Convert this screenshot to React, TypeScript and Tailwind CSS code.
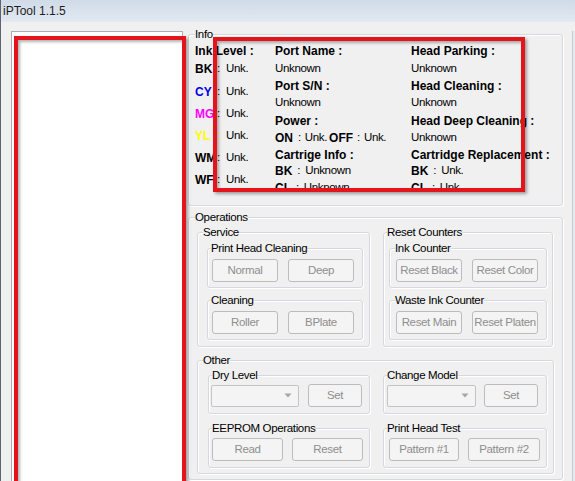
import React from "react";

type GBProps = {
  label: string;
  labelPos: string;
  className?: string;
  children?: React.ReactNode;
};

function GroupBox({ label, labelPos, className = "", children }: GBProps) {
  return (
    <div
      className={`relative rounded-[3px] border border-[#d5d9dd] shadow-[inset_1px_1px_0_#ffffff,1px_1px_0_#ffffff] ${className}`}
    >
      <span
        className={`absolute -top-[8px] ${labelPos} bg-[#f0f0f0] leading-[14px] text-black whitespace-nowrap`}
      >
        {label}
      </span>
      {children}
    </div>
  );
}

function Btn({ w, children }: { w: string; children: React.ReactNode }) {
  return (
    <div
      className={`${w} h-[23px] flex-none flex items-center justify-center rounded-[3px] border border-[#bcbcbc] bg-[#f4f4f4] text-[#8e8e8e] leading-none`}
    >
      {children}
    </div>
  );
}

function Combo({ w }: { w: string }) {
  return (
    <div
      className={`${w} h-[22px] flex-none flex items-center justify-end pr-[6px] rounded-[2px] border border-[#c4c4c4] bg-[#f4f4f4]`}
    >
      <svg width="8" height="5" viewBox="0 0 8 5">
        <path d="M0.5 0.5 L7.5 0.5 L4 4.5 Z" fill="#a6a6a6" />
      </svg>
    </div>
  );
}

const B = ({ children }: { children: React.ReactNode }) => (
  <span className="font-bold text-[12px] tracking-normal">{children}</span>
);

function KV({ k, v }: { k: string; v: string }) {
  return (
    <>
      <B>{k}</B>
      <span className="ml-[5px]">:</span>
      <span className="ml-[5px]">{v}</span>
    </>
  );
}

function InkRow({
  label,
  color,
  colonColor = "text-black",
  h,
}: {
  label: string;
  color: string;
  colonColor?: string;
  h: string;
}) {
  return (
    <div className={`${h} flex items-center`}>
      <span className={`w-[21px] font-bold text-[12px] tracking-normal ${color}`}>{label}</span>
      <span className={`w-[10px] pl-[1px] ${colonColor}`}>:</span>
      <span>Unk.</span>
    </div>
  );
}

export default function App() {
  const rowH = ["h-[18px]", "h-[18px]", "h-[17px]", "h-[18px]", "h-[18px]", "h-[17px]", "h-[16px]", "h-[17px]", "h-[16px]"];
  const port: React.ReactNode[] = [
    <B>Port Name :</B>,
    "Unknown",
    <B>Port S/N :</B>,
    "Unknown",
    <B>Power :</B>,
    <>
      <B>ON</B>
      <span className="ml-[5px]">:</span>
      <span className="ml-[4px]">Unk.</span>
      <span className="ml-[2px]">
        <B>OFF</B>
      </span>
      <span className="ml-[4px]">:</span>
      <span className="ml-[4px]">Unk.</span>
    </>,
    <B>Cartrige Info :</B>,
    <KV k="BK" v="Unknown" />,
    <KV k="CL" v="Unknown" />,
  ];
  const head: React.ReactNode[] = [
    <B>Head Parking :</B>,
    "Unknown",
    <B>Head Cleaning :</B>,
    "Unknown",
    <B>Head Deep Cleaning :</B>,
    "Unknown",
    <B>Cartridge Replacement :</B>,
    <KV k="BK" v="Unk." />,
    <KV k="CL" v="Unk." />,
  ];

  return (
    <div className="relative w-[575px] h-[481px] overflow-hidden bg-[#f0f0f0] border-l border-[#5b6470] flex flex-col font-['Liberation_Sans',Arial,sans-serif] text-[11.5px] tracking-[-0.35px] text-black">
      {/* Title bar */}
      <div className="h-[22px] flex-none flex items-center pl-[2px] bg-linear-to-b from-[#d0dbe8] to-[#e2e9f1] text-[12px] tracking-normal text-[#1e1e1e]">
        iPTool 1.1.5
      </div>

      {/* Body */}
      <div className="flex-1 flex items-start pt-[9px] pl-[10px]">
        {/* list box */}
        <div className="w-[172px] h-[460px] flex-none border border-[#abadb3] bg-white" />

        {/* right column */}
        <div className="ml-[5px] w-[375px] flex-none flex flex-col pt-[3px]">
          {/* Info */}
          <GroupBox label="Info" labelPos="left-[6px]" className="pt-[7px] pb-[14px]">
            <div className="h-[149px] overflow-hidden flex pl-[6px]">
              <div className="w-[80px] flex-none flex flex-col">
                <div className="h-[18px] flex items-center">
                  <B>Ink Level :</B>
                </div>
                <InkRow label="BK" color="text-black" h="h-[18px]" />
                <div className="h-[3px]" />
                <InkRow label="CY" color="text-[#0000e6]" h="h-[24px]" />
                <InkRow label="MG" color="text-[#ff00ff]" h="h-[24px]" />
                <InkRow label="YL" color="text-[#ffff00]" colonColor="text-[#ffff00]" h="h-[24px]" />
                <InkRow label="WM" color="text-black" h="h-[24px]" />
                <InkRow label="WF" color="text-black" h="h-[24px]" />
              </div>
              <div className="w-[136px] flex-none flex flex-col">
                {port.map((c, i) => (
                  <div key={i} className={`${rowH[i]} flex items-center whitespace-nowrap`}>
                    {c}
                  </div>
                ))}
              </div>
              <div className="flex-1 flex flex-col">
                {head.map((c, i) => (
                  <div key={i} className={`${rowH[i]} flex items-center whitespace-nowrap`}>
                    {c}
                  </div>
                ))}
              </div>
            </div>
          </GroupBox>

          {/* Operations */}
          <GroupBox label="Operations" labelPos="left-[6px]" className="mt-[11px] pt-[14px] pl-[8px] pr-[9px] pb-[5px]">
            <div className="flex gap-[13px]">
              <GroupBox label="Service" labelPos="left-[5px]" className="w-[173px] pt-[15px] pl-[9px] pb-[6px]">
                <GroupBox label="Print Head Cleaning" labelPos="left-[3px]" className="w-[156px] pt-[10px] pl-[4px] pb-[5px]">
                  <div className="flex gap-[10px]">
                    <Btn w="w-[66px]">Normal</Btn>
                    <Btn w="w-[66px]">Deep</Btn>
                  </div>
                </GroupBox>
                <GroupBox label="Cleaning" labelPos="left-[3px]" className="mt-[12px] w-[156px] pt-[10px] pl-[4px] pb-[5px]">
                  <div className="flex gap-[10px]">
                    <Btn w="w-[66px]">Roller</Btn>
                    <Btn w="w-[66px]">BPlate</Btn>
                  </div>
                </GroupBox>
              </GroupBox>
              <GroupBox label="Reset Counters" labelPos="left-[3px]" className="w-[170px] pt-[15px] pl-[5px] pb-[6px]">
                <GroupBox label="Ink Counter" labelPos="left-[5px]" className="w-[158px] pt-[10px] pl-[6px] pb-[5px]">
                  <div className="flex gap-[10px]">
                    <Btn w="w-[66px]">Reset Black</Btn>
                    <Btn w="w-[66px]">Reset Color</Btn>
                  </div>
                </GroupBox>
                <GroupBox label="Waste Ink Counter" labelPos="left-[5px]" className="mt-[12px] w-[158px] pt-[10px] pl-[6px] pb-[5px]">
                  <div className="flex gap-[10px]">
                    <Btn w="w-[66px]">Reset Main</Btn>
                    <Btn w="w-[66px]">Reset Platen</Btn>
                  </div>
                </GroupBox>
              </GroupBox>
            </div>

            <GroupBox label="Other" labelPos="left-[5px]" className="mt-[13px] w-[357px] pt-[14px] pl-[10px] pb-[5px]">
              <div className="grid grid-cols-[162px_164px] gap-x-[13px] gap-y-[14px]">
                <GroupBox label="Dry Level" labelPos="left-[3px]" className="pt-[8px] pl-[2px] pb-[6px]">
                  <div className="flex items-center gap-[9px]">
                    <Combo w="w-[88px]" />
                    <Btn w="w-[54px]">Set</Btn>
                  </div>
                </GroupBox>
                <GroupBox label="Change Model" labelPos="left-[3px]" className="pt-[8px] pl-[3px] pb-[6px]">
                  <div className="flex items-center gap-[8px]">
                    <Combo w="w-[89px]" />
                    <Btn w="w-[54px]">Set</Btn>
                  </div>
                </GroupBox>
                <GroupBox label="EEPROM Operations" labelPos="left-[3px]" className="pt-[9px] pl-[3px] pb-[6px]">
                  <div className="flex gap-[9px]">
                    <Btn w="w-[71px]">Read</Btn>
                    <Btn w="w-[71px]">Reset</Btn>
                  </div>
                </GroupBox>
                <GroupBox label="Print Head Test" labelPos="left-[3px]" className="pt-[9px] pl-[5px] pb-[6px]">
                  <div className="flex gap-[9px]">
                    <Btn w="w-[70px]">Pattern #1</Btn>
                    <Btn w="w-[72px]">Pattern #2</Btn>
                  </div>
                </GroupBox>
              </div>
            </GroupBox>
          </GroupBox>
        </div>

        {/* right window frame */}
        <div className="ml-auto w-[3px] h-[470px] flex-none border-l border-[#c3cad2] bg-[#e6ebf0]" />
      </div>

      {/* red annotation rectangles */}
      <div className="absolute left-[13px] top-[36px] w-[172px] h-[470px] border-4 border-[#e3141b] shadow-[2px_2px_3px_rgba(0,0,0,0.35),inset_2px_2px_3px_rgba(0,0,0,0.3)]" />
      <div className="absolute left-[212px] top-[37px] w-[312px] h-[155px] border-4 border-[#e3141b] shadow-[2px_2px_3px_rgba(0,0,0,0.35),inset_2px_2px_3px_rgba(0,0,0,0.3)]" />
    </div>
  );
}
